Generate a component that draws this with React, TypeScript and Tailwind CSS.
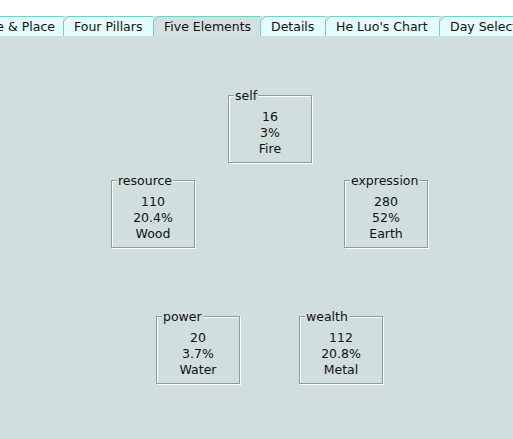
import React from "react";

const tabs = [
  { label: "Date & Place", w: 103, first: true },
  { label: "Four Pillars", w: 90 },
  { label: "Five Elements", w: 107, selected: true },
  { label: "Details", w: 65 },
  { label: "He Luo's Chart", w: 114 },
  { label: "Day Selection", w: 110 },
];

function Tab({ label, w, selected, first }: { label: string; w: number; selected?: boolean; first?: boolean }) {
  return (
    <div
      className={`relative h-[20px] shrink-0 border-l border-t border-[#74d0c6] flex items-center pt-[2px] [clip-path:polygon(5px_0,100%_0,100%_100%,0_100%,0_5px)] ${
        selected ? "bg-[#d3e0e0]" : "bg-[#e4fbfb]"
      } ${first ? "justify-end pr-[8px]" : "pl-[10px]"}`}
      style={{ width: w }}
    >
      <svg className="absolute left-[-1px] top-[-1px]" width="7" height="7" viewBox="0 0 7 7">
        <line x1="0.5" y1="5.5" x2="5.5" y2="0.5" stroke="#74d0c6" strokeWidth="1" />
      </svg>
      <span className="whitespace-nowrap text-[12.5px] text-[#111] leading-none">{label}</span>
    </div>
  );
}

function Box({ title, lines, left, top }: { title: string; lines: string[]; left: number; top: number }) {
  return (
    <div
      className="absolute w-[84px] h-[68px] border border-[#8e9c9c] shadow-[1px_1px_0_#ffffff,inset_1px_1px_0_#ffffff] flex flex-col items-center pt-[13px]"
      style={{ left, top }}
    >
      <span className="absolute left-[5px] top-[-7px] bg-[#d0dede] px-[1px] text-[12.5px] leading-[14px] text-[#111]">
        {title}
      </span>
      {lines.map((l) => (
        <div key={l} className="text-[12.5px] leading-[16px] text-[#111]">
          {l}
        </div>
      ))}
    </div>
  );
}

export default function App() {
  return (
    <div className="w-[513px] h-[439px] bg-white overflow-hidden flex flex-col" style={{ fontFamily: '"DejaVu Sans", Verdana, sans-serif' }}>
      <div className="h-[16px] shrink-0 bg-white" />
      <div className="flex shrink-0 ml-[-40px] bg-[#d0dede] items-end">
        {tabs.map((t) => (
          <Tab key={t.label} {...t} />
        ))}
      </div>
      <div className="relative flex-1 bg-[#d0dede]">
        <Box title="self" lines={["16", "3%", "Fire"]} left={228} top={59} />
        <Box title="resource" lines={["110", "20.4%", "Wood"]} left={111} top={144} />
        <Box title="expression" lines={["280", "52%", "Earth"]} left={344} top={144} />
        <Box title="power" lines={["20", "3.7%", "Water"]} left={156} top={280} />
        <Box title="wealth" lines={["112", "20.8%", "Metal"]} left={299} top={280} />
      </div>
    </div>
  );
}
